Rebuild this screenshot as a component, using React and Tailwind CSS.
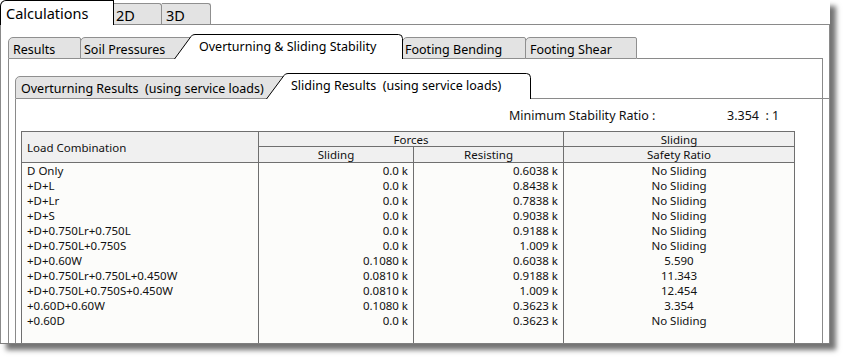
const rows = [
  ["D Only", "0.0 k", "0.6038 k", "No Sliding"],
  ["+D+L", "0.0 k", "0.8438 k", "No Sliding"],
  ["+D+Lr", "0.0 k", "0.7838 k", "No Sliding"],
  ["+D+S", "0.0 k", "0.9038 k", "No Sliding"],
  ["+D+0.750Lr+0.750L", "0.0 k", "0.9188 k", "No Sliding"],
  ["+D+0.750L+0.750S", "0.0 k", "1.009 k", "No Sliding"],
  ["+D+0.60W", "0.1080 k", "0.6038 k", "5.590"],
  ["+D+0.750Lr+0.750L+0.450W", "0.0810 k", "0.9188 k", "11.343"],
  ["+D+0.750L+0.750S+0.450W", "0.0810 k", "1.009 k", "12.454"],
  ["+0.60D+0.60W", "0.1080 k", "0.3623 k", "3.354"],
  ["+0.60D", "0.0 k", "0.3623 k", "No Sliding"],
]

// slanted white tab with black outline (active sub tabs)
function SlantTab({ width, height, slant, label, textLeft, className }) {
  const w = width - 0.5
  const d = `M0.5 ${height} L${slant - 1} 2.5 Q${slant} 0.5 ${slant + 3} 0.5 L${w - 4} 0.5 Q${w} 0.5 ${w} 4.5 L${w} ${height}`
  return (
    <div className={`relative z-10 shrink-0 ${className}`} style={{ width, height }}>
      <svg className="absolute inset-0" width={width} height={height}>
        <path d={d + " Z"} fill="#fff" stroke="none" />
        <path d={d} fill="none" stroke="#000" strokeWidth="1" />
      </svg>
      <span className="absolute top-[4px] whitespace-pre text-[12.5px] leading-[17px] text-black" style={{ left: textLeft }}>
        {label}
      </span>
    </div>
  )
}

function GrayTab({ label, className }) {
  return (
    <div
      className={`shrink-0 border border-[#8f8f8f] rounded-tl-[5px] rounded-tr-[2px] bg-[#e3e3e3] whitespace-pre text-[12.5px] leading-[17px] text-black overflow-hidden ${className}`}
    >
      {label}
    </div>
  )
}

export default function App() {
  return (
    <div className="w-[845px] h-[359px] bg-white font-['Noto_Sans',sans-serif]">
      <div className="w-[830px] h-[344px] flex flex-col bg-white border-b border-[#7f7f7f] shadow-[6px_6px_5px_rgba(0,0,0,0.55)] overflow-hidden">
        {/* top level tabs */}
        <div className="flex items-end h-[25px] shrink-0">
          <div className="w-[114px] h-[25px] shrink-0 border border-b-0 border-black rounded-tl-[6px] bg-white pl-[5px] pt-px text-[14.5px] leading-[22px] text-black">
            Calculations
          </div>
          <div className="w-[48px] h-[22px] shrink-0 border-t border-r border-b border-[#8f8f8f] border-b-[#8a8a8a] rounded-tr-[3px] bg-[#e3e3e3] pl-[2px] pt-px text-[14.5px] leading-[20px] text-black">
            2D
          </div>
          <div className="w-[49px] h-[22px] shrink-0 border-t border-r border-b border-[#8f8f8f] border-b-[#8a8a8a] rounded-tr-[3px] bg-[#e3e3e3] pl-[4px] pt-px text-[14.5px] leading-[20px] text-black">
            3D
          </div>
          <div className="flex-1 h-full border-b border-[#8a8a8a]" />
        </div>

        {/* outer panel */}
        <div className="flex-1 flex flex-col min-h-0 border-l border-r border-[#8a8a8a] pl-[7px] pr-[6px] pt-[9px]">
          {/* second level tabs */}
          <div className="flex items-end h-[25px] shrink-0">
            <GrayTab label="Results" className="w-[73px] h-[22px] pl-[4px] pt-[3px]" />
            <GrayTab label="Soil Pressures" className="-ml-px w-[112px] h-[22px] pl-[3px] pt-[3px]" />
            <SlantTab width={229} height={25} slant={18} label="Overturning & Sliding Stability" textLeft={25} className="-ml-[18px]" />
            <GrayTab label="Footing Bending" className="-ml-px w-[124px] h-[22px] pl-[2px] pt-[3px]" />
            <GrayTab label="Footing Shear" className="-ml-px w-[112px] h-[22px] pl-[4px] pt-[3px]" />
            <div className="flex-1 h-full border-b border-[#8a8a8a]" />
          </div>

          {/* second level panel */}
          <div className="flex-1 flex flex-col min-h-0 border-l border-r border-[#8a8a8a] pl-[6px] pt-[14px]">
            {/* third level tabs */}
            <div className="flex items-end h-[26px] shrink-0 -mr-[8px]">
              <GrayTab label="Overturning Results  (using service loads)" className="w-[270px] h-[23px] pl-[5px] pt-[3px]" />
              <SlantTab width={265} height={26} slant={19} label="Sliding Results  (using service loads)" textLeft={25} className="-ml-[19px]" />
              <div className="flex-1 h-full border-b border-[#8a8a8a]" />
            </div>

            {/* third level panel */}
            <div className="flex-1 flex flex-col min-h-0 border-l border-[#8a8a8a] pl-[5px] pt-[9px]">
              <div className="flex h-[16px] shrink-0 mb-[7px] pl-[488px] text-[12.5px] leading-[16px] text-[#111]">
                <span className="w-[218px]">Minimum Stability Ratio :</span>
                <span className="whitespace-pre">3.354  : 1</span>
              </div>

              {/* table */}
              <div className="w-[774px] flex-1 flex flex-col border-l border-r border-t border-[#6f6f6f] bg-[#fcfcfa] text-[11.5px] leading-[15px] text-[#111]">
                <div className="flex h-[31px] shrink-0 border-b border-[#6f6f6f] bg-[#f0f0f0]">
                  <div className="w-[237px] border-r border-[#6f6f6f] flex items-center pl-[5px] pt-px">Load Combination</div>
                  <div className="w-[305px] border-r border-[#6f6f6f] flex flex-col">
                    <div className="h-[15px] border-b border-[#6f6f6f] text-center">Forces</div>
                    <div className="flex flex-1">
                      <div className="w-[155px] border-r border-[#6f6f6f] text-center">Sliding</div>
                      <div className="flex-1 text-center">Resisting</div>
                    </div>
                  </div>
                  <div className="flex-1 flex flex-col">
                    <div className="h-[15px] border-b border-[#6f6f6f] text-center">Sliding</div>
                    <div className="flex-1 text-center">Safety Ratio</div>
                  </div>
                </div>
                <div className="flex flex-1">
                  <div className="w-[237px] border-r border-[#6f6f6f] pl-[5px]">
                    {rows.map((r) => (
                      <div key={r[0]} className="h-[15px] whitespace-nowrap">{r[0]}</div>
                    ))}
                  </div>
                  <div className="w-[155px] border-r border-[#6f6f6f] pr-[5px] text-right">
                    {rows.map((r, i) => (
                      <div key={i} className="h-[15px]">{r[1]}</div>
                    ))}
                  </div>
                  <div className="w-[150px] border-r border-[#6f6f6f] pr-[5px] text-right">
                    {rows.map((r, i) => (
                      <div key={i} className="h-[15px]">{r[2]}</div>
                    ))}
                  </div>
                  <div className="flex-1 text-center">
                    {rows.map((r, i) => (
                      <div key={i} className="h-[15px]">{r[3]}</div>
                    ))}
                  </div>
                </div>
              </div>
            </div>
          </div>
        </div>
      </div>
    </div>
  )
}
